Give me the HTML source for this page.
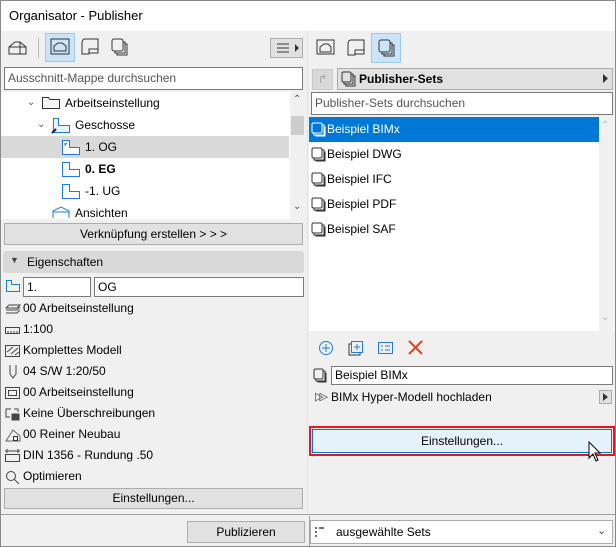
<!DOCTYPE html><html><head><style>
*{box-sizing:border-box;margin:0;padding:0}
body{width:616px;height:547px;position:relative;overflow:hidden;background:#f0f0f0;font-family:"Liberation Sans",sans-serif;font-size:12px;color:#000}
.a{position:absolute}
.btn{position:absolute;background:#e1e1e1;border:1px solid #adadad;text-align:center;font-size:12px}
.inp{position:absolute;background:#fff;border:1px solid #7a7a7a;padding-left:3px;font-size:12px}
.row{position:absolute;left:5px;height:20px;line-height:20px;white-space:nowrap}
.row svg{vertical-align:middle;margin-right:2px}
</style></head><body>
<div class="a" style="left:0;top:0;width:616px;height:547px;border:1px solid #8a8a8a"></div>
<div class="a" style="left:1px;top:1px;width:614px;height:30px;background:#fff"></div>
<div class="a" style="left:9px;top:8px;font-size:13px">Organisator - Publisher</div>
<!-- left toolbar -->
<svg class="a" style="left:8px;top:40px" width="20" height="16" fill="none" stroke="#333"><path d="M1 14V7L7 2H12L18 7V14ZM1 7H12L18 7M12 2V14"/></svg>
<div class="a" style="left:38px;top:38px;width:1px;height:20px;background:#bbb"></div>
<div class="a" style="left:45px;top:33px;width:30px;height:29px;background:#cce4f7;border:1px solid #99c9ef"></div>
<svg class="a" style="left:50px;top:38px" width="20" height="18" fill="none" stroke="#333"><rect x="1" y="1" width="18" height="15"/><path d="M4 13V8L8 5H12L16 8V13Z"/></svg>
<svg class="a" style="left:80px;top:38px" width="20" height="18" fill="none" stroke="#333"><path d="M5 1H18V15H9M5 1C2 1 2 4 2 8V16H9V11H18"/></svg>
<svg class="a" style="left:111px;top:38px" width="18" height="18" fill="none" stroke="#333"><rect x="1" y="1" width="11" height="12" rx="2"/><path d="M12 4H14V15H4V13M14 6H16V17H6V15"/></svg>
<div class="a" style="left:270px;top:38px;width:33px;height:20px;background:#e1e1e1;border:1px solid #adadad"></div>
<svg class="a" style="left:276px;top:42px" width="24" height="12"><path d="M1 2H13M1 6H13M1 10H13" stroke="#333"/><path d="M19 2L23 6L19 10Z" fill="#333"/></svg>
<div class="inp" style="left:4px;top:67px;width:299px;height:23px;line-height:21px;color:#555">Ausschnitt-Mappe durchsuchen</div>
<!-- tree -->
<div class="a" style="left:1px;top:92px;width:289px;height:127px;background:#fff"></div>
<div class="a" style="left:290px;top:92px;width:15px;height:127px;background:#f0f0f0"></div>
<div class="a" style="left:291px;top:116px;width:13px;height:19px;background:#cdcdcd"></div>
<div class="a" style="left:293px;top:94px;font-size:10px;color:#555">&#8963;</div>
<div class="a" style="left:293px;top:201px;font-size:10px;color:#555">&#8964;</div>
<div class="a" style="left:1px;top:136px;width:288px;height:22px;background:#d9d9d9"></div>
<div class="a" style="left:27px;top:97px;font-size:10px;color:#555">&#8964;</div>
<svg class="a" style="left:42px;top:95px" width="19" height="15" fill="#f4f4f4" stroke="#333"><path d="M0.5 2.5H6.5L8 4.5H17.5V13.5H0.5Z"/></svg>
<div class="a" style="left:65px;top:96px">Arbeitseinstellung</div>
<div class="a" style="left:37px;top:119px;font-size:10px;color:#555">&#8964;</div>
<svg class="a" style="left:50px;top:117px" width="20" height="17" fill="#eaf3ff" stroke="#1e7be0"><path d="M3.5 1.5H8.5V8.5H19.5V15.5H3.5Z"/><path d="M2 16L6 12" stroke="#222" stroke-width="2"/></svg>
<div class="a" style="left:75px;top:118px">Geschosse</div>
<svg class="a" style="left:61px;top:139px" width="20" height="17" fill="#fff" stroke="#1e7be0"><path d="M1.5 1.5H8.5V8.5H18.5V15.5H1.5Z"/><path d="M4 4V6L6 4" /></svg>
<div class="a" style="left:85px;top:140px">1. OG</div>
<svg class="a" style="left:61px;top:161px" width="20" height="17" fill="#fff" stroke="#1e7be0"><path d="M1.5 1.5H8.5V8.5H18.5V15.5H1.5Z"/></svg>
<div class="a" style="left:85px;top:162px;font-weight:bold">0. EG</div>
<svg class="a" style="left:61px;top:183px" width="20" height="17" fill="#fff" stroke="#1e7be0"><path d="M1.5 1.5H8.5V8.5H18.5V15.5H1.5Z"/></svg>
<div class="a" style="left:85px;top:184px">-1. UG</div>
<svg class="a" style="left:51px;top:205px" width="20" height="14" fill="none" stroke="#1e7be0"><path d="M2 13V6L10 2L18 6V13M2 7H18"/></svg>
<div class="a" style="left:75px;top:206px">Ansichten</div>
<div class="btn" style="left:4px;top:223px;width:299px;height:22px;line-height:20px">Verknüpfung erstellen &gt; &gt; &gt;</div>
<!-- properties -->
<div class="a" style="left:3px;top:251px;width:301px;height:22px;background:#d9d9d9;border-radius:3px"></div>
<div class="a" style="left:10px;top:255px;font-size:9px;color:#444">&#9660;</div>
<div class="a" style="left:27px;top:255px">Eigenschaften</div>
<svg class="a" style="left:5px;top:279px" width="16" height="14" fill="none" stroke="#1e7be0"><path d="M1.5 1.5H6.5V5.5H14.5V12.5H1.5Z"/></svg>
<div class="inp" style="left:23px;top:277px;width:68px;height:20px;line-height:18px">1.</div>
<div class="inp" style="left:94px;top:277px;width:210px;height:20px;line-height:18px">OG</div>
<div class="row" style="top:298px"><svg width="16" height="12" fill="none" stroke="#444"><path d="M4 2H15L12 5H1ZM1 7H12L15 4M1 10H12L15 7"/></svg>00 Arbeitseinstellung</div>
<div class="row" style="top:319px"><svg width="16" height="10" fill="none" stroke="#444"><rect x=".5" y="2.5" width="14" height="6"/><path d="M3 8V6M6 8V6M9 8V6M12 8V6"/></svg>1:100</div>
<div class="row" style="top:340px"><svg width="16" height="14" fill="none" stroke="#444"><rect x=".5" y="1.5" width="14" height="11"/><path d="M2 8L8 3M6 10L13 4M10 11L14 8"/></svg>Komplettes Modell</div>
<div class="row" style="top:361px"><svg width="16" height="14" fill="none" stroke="#444"><path d="M5 0V9L8 13L11 9V0"/></svg>04 S/W 1:20/50</div>
<div class="row" style="top:382px"><svg width="16" height="14" fill="none" stroke="#444"><rect x=".5" y="1.5" width="14" height="11"/><rect x="3.5" y="4.5" width="8" height="5"/></svg>00 Arbeitseinstellung</div>
<div class="row" style="top:403px"><svg width="16" height="14" fill="none" stroke="#444"><path d="M6 2H1V10H5"/><rect x="7" y="7" width="7" height="6" fill="#444"/><path d="M9 2H13V5"/></svg>Keine Überschreibungen</div>
<div class="row" style="top:424px"><svg width="16" height="14" fill="none" stroke="#666"><path d="M1 13L8 2L15 8V13Z"/><rect x="8.5" y="8.5" width="4" height="4" stroke="#333"/></svg>00 Reiner Neubau</div>
<div class="row" style="top:445px"><svg width="16" height="14" fill="none" stroke="#444"><path d="M0 2H15M2 0V4M13 0V4"/><rect x=".5" y="5.5" width="14" height="7"/></svg>DIN 1356 - Rundung .50</div>
<div class="row" style="top:466px"><svg width="16" height="14" fill="none" stroke="#444"><circle cx="6" cy="6" r="4.5"/><path d="M9 9L14 14"/></svg>Optimieren</div>
<div class="btn" style="left:4px;top:488px;width:299px;height:21px;line-height:19px">Einstellungen...</div>
<div class="a" style="left:1px;top:514px;width:614px;height:1px;background:#a0a0a0"></div>
<div class="a" style="left:307px;top:31px;width:1px;height:483px;background:#e3e3e3"></div>
<div class="btn" style="left:187px;top:521px;width:118px;height:22px;line-height:20px">Publizieren</div>
<div class="a" style="left:309px;top:516px;width:1px;height:30px;background:#a0a0a0"></div>
<div class="inp" style="left:310px;top:520px;width:303px;height:24px;border-color:#adadad"></div>
<svg class="a" style="left:315px;top:527px" width="10" height="10"><path d="M0 1H2M0 5H2M0 9H2M4 1H9" stroke="#444" stroke-width="1.5"/></svg>
<div class="a" style="left:336px;top:525px">ausgewählte Sets</div>
<div class="a" style="left:597px;top:524px;font-size:11px;color:#444">&#8964;</div>
<!-- right -->
<svg class="a" style="left:316px;top:39px" width="20" height="18" fill="none" stroke="#333"><rect x="1" y="1" width="17" height="14"/><path d="M4 13V8L8 5H12L15 8V13Z"/></svg>
<svg class="a" style="left:346px;top:39px" width="20" height="18" fill="none" stroke="#333"><path d="M5 1H18V15H9M5 1C2 1 2 4 2 8V16H9V11H18"/></svg>
<div class="a" style="left:371px;top:33px;width:30px;height:30px;background:#cce4f7;border:1px solid #99c9ef"></div>
<svg class="a" style="left:378px;top:39px" width="18" height="18" fill="none" stroke="#333"><rect x="1" y="1" width="11" height="12" rx="2"/><path d="M12 4H14V15H4V13M14 6H16V17H6V15"/></svg>
<div class="a" style="left:312px;top:69px;width:21px;height:21px;background:#d9d9d9;border:1px solid #c8c8c8;color:#aaa;text-align:center;font-size:12px;line-height:19px">&#8625;</div>
<div class="a" style="left:337px;top:68px;width:276px;height:22px;background:#e1e1e1;border:1px solid #adadad"></div>
<svg class="a" style="left:341px;top:71px" width="16" height="16" fill="none" stroke="#333"><rect x="1" y="1" width="9" height="10" rx="1.5"/><path d="M10 3H12V13H3V11M12 5H14V15H5V13"/></svg>
<div class="a" style="left:359px;top:72px;font-weight:bold">Publisher-Sets</div>
<svg class="a" style="left:603px;top:74px" width="6" height="9"><path d="M0 0L5 4.5L0 9Z" fill="#333"/></svg>
<div class="inp" style="left:311px;top:92px;width:302px;height:23px;line-height:21px;color:#555">Publisher-Sets durchsuchen</div>
<div class="a" style="left:309px;top:117px;width:305px;height:214px;background:#fff"></div>
<div class="a" style="left:599px;top:117px;width:14px;height:214px;background:#f0f0f0"></div>
<div class="a" style="left:601px;top:120px;font-size:10px;color:#bbb">&#8963;</div>
<div class="a" style="left:601px;top:312px;font-size:10px;color:#bbb">&#8964;</div>
<div class="a" style="left:309px;top:117px;width:290px;height:25px;background:#0078d7"></div>
<div class="a" style="left:311px;top:121px;line-height:16px">
<div style="height:25px;color:#fff"><svg width="16" height="16" fill="none" stroke="#fff" style="vertical-align:middle"><rect x="1" y="1" width="10" height="10" rx="1.5"/><path d="M11 3H13V13H3V11M13 5H14V14H5V13"/></svg>Beispiel BIMx</div>
<div style="height:25px"><svg width="16" height="16" fill="none" stroke="#333" style="vertical-align:middle"><rect x="1" y="1" width="10" height="10" rx="1.5"/><path d="M11 3H13V13H3V11M13 5H14V14H5V13"/></svg>Beispiel DWG</div>
<div style="height:25px"><svg width="16" height="16" fill="none" stroke="#333" style="vertical-align:middle"><rect x="1" y="1" width="10" height="10" rx="1.5"/><path d="M11 3H13V13H3V11M13 5H14V14H5V13"/></svg>Beispiel IFC</div>
<div style="height:25px"><svg width="16" height="16" fill="none" stroke="#333" style="vertical-align:middle"><rect x="1" y="1" width="10" height="10" rx="1.5"/><path d="M11 3H13V13H3V11M13 5H14V14H5V13"/></svg>Beispiel PDF</div>
<div style="height:25px"><svg width="16" height="16" fill="none" stroke="#333" style="vertical-align:middle"><rect x="1" y="1" width="10" height="10" rx="1.5"/><path d="M11 3H13V13H3V11M13 5H14V14H5V13"/></svg>Beispiel SAF</div>
</div>
<svg class="a" style="left:318px;top:340px" width="16" height="16" fill="none" stroke="#1e7be0"><circle cx="8" cy="8" r="6.5"/><path d="M8 4V12M4 8H12"/></svg>
<svg class="a" style="left:348px;top:340px" width="16" height="16" fill="none" stroke="#333"><path d="M3 4H1V15H12V13"/><rect x="3.5" y="1.5" width="11" height="11" stroke="#1e7be0"/><path d="M9 4V10M6 7H12" stroke="#1e7be0"/></svg>
<svg class="a" style="left:378px;top:341px" width="16" height="14" fill="none" stroke="#1e7be0"><rect x=".5" y="1.5" width="14" height="11"/><path d="M3 5H5M7 5H12M3 9H5M7 9H12"/></svg>
<svg class="a" style="left:408px;top:340px" width="15" height="15" stroke="#f03c1e" stroke-width="2"><path d="M1 1L14 14M14 1L1 14"/></svg>
<svg class="a" style="left:313px;top:368px" width="16" height="16" fill="none" stroke="#333"><rect x="1" y="1" width="9" height="10" rx="1.5"/><path d="M10 3H12V13H3V11M12 5H13V14H5V13"/></svg>
<div class="inp" style="left:331px;top:366px;width:282px;height:19px;line-height:17px">Beispiel BIMx</div>
<div class="a" style="left:315px;top:390px;color:#333;font-size:11px;letter-spacing:-4px">&#9655;&#9655;</div>
<div class="a" style="left:331px;top:390px">BIMx Hyper-Modell hochladen</div>
<div class="a" style="left:599px;top:390px;width:13px;height:14px;background:#e1e1e1;border:1px solid #adadad"></div>
<svg class="a" style="left:603px;top:393px" width="5" height="8"><path d="M0 0L5 4L0 8Z" fill="#333"/></svg>
<div class="a" style="left:309px;top:426px;width:306px;height:30px;border:2px solid #e8141e"></div>
<div class="a" style="left:312px;top:429px;width:300px;height:24px;background:#e5f1fb;border:1px solid #0078d7;text-align:center;line-height:22px">Einstellungen...</div>
<svg class="a" style="left:588px;top:441px" width="14" height="22"><path d="M1 1V17L5 13L8 20L10 19L7 12H12Z" fill="#fff" stroke="#000"/></svg>
</body></html>
